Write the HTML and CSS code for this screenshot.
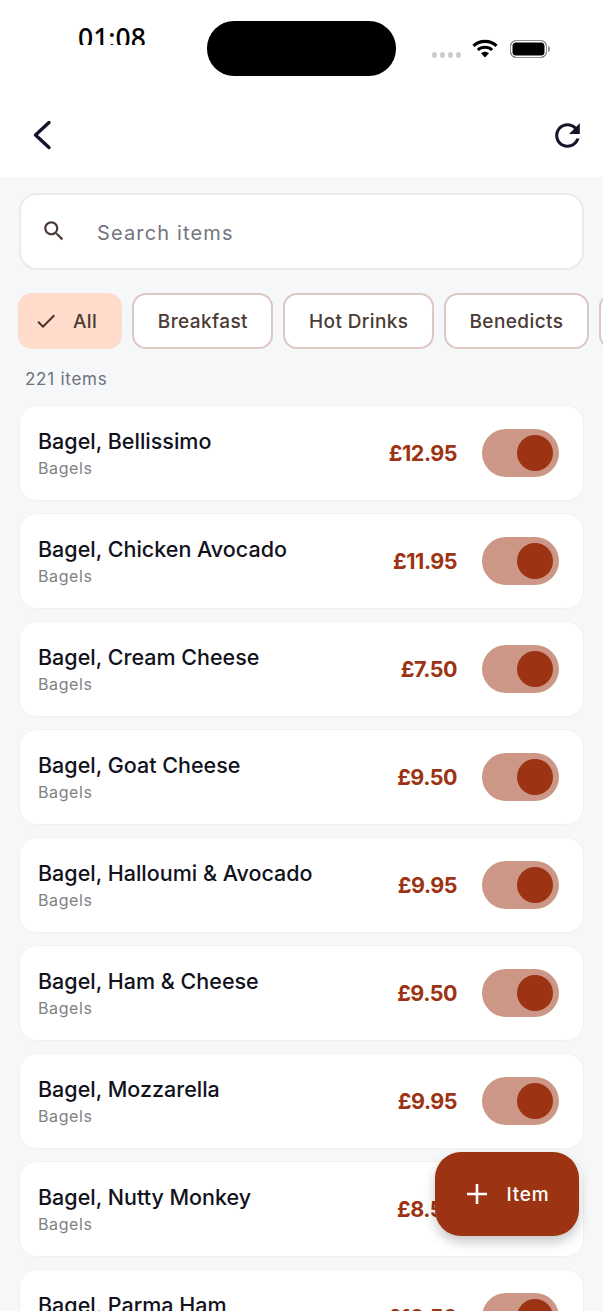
FILE: index.html
```html
<!DOCTYPE html>
<html lang="en">
<head>
<meta charset="utf-8">
<title>Items</title>
<link rel="stylesheet" href="styles.css">
</head>
<body>
<div class="screen">
  <header class="top">
    <div class="status">
      <div class="time"><span>01:08</span></div>
      <div class="island"></div>
      <div class="sys">
        <div class="dots"><i></i><i></i><i></i><i></i></div>
        <svg class="wifi" width="26" height="19" viewBox="0 0 26 19"><path d="M1.5 6.8C7.8 .9 18.2 .9 24.5 6.8" fill="none" stroke="#000" stroke-width="3.2"/><path d="M5.8 11C9.8 7.3 16.2 7.3 20.2 11" fill="none" stroke="#000" stroke-width="3"/><path d="M9 14.2 13 18.4 17 14.2C14.700 12.100 11.300 12.100 9 14.200Z" fill="#000"/></svg>
        <div class="battery"><div class="cell"></div><div class="nub"></div></div>
      </div>
    </div>
    <div class="nav">
      <svg width="22" height="32" viewBox="0 0 22 32"><path d="M18 3.500 4.500 16 18 28.500" fill="none" stroke="#14142a" stroke-width="3.400" stroke-linecap="round" stroke-linejoin="round"/></svg>
      <svg width="37" height="37" viewBox="0 0 24 24"><path fill="#14142a" d="M17.650 6.350C16.200 4.900 14.210 4 12 4c-4.420 0-7.990 3.580-7.990 8s3.570 8 7.990 8c3.730 0 6.840-2.550 7.730-6h-2.080c-.820 2.330-3.040 4-5.650 4-3.310 0-6-2.690-6-6s2.690-6 6-6c1.660 0 3.140.690 4.220 1.780L13 11h7V4l-2.350 2.350z"/></svg>
    </div>
  </header>
  <main class="body">
    <div class="search">
      <svg width="26" height="26" viewBox="0 0 24 24"><path fill="#4a3b36" d="M15.500 14h-.790l-.280-.270C15.410 12.590 16 11.110 16 9.500 16 5.910 13.090 3 9.500 3S3 5.910 3 9.500 5.910 16 9.500 16c1.610 0 3.090-.590 4.230-1.570l.270.280v.790l5 4.990L20.490 19l-4.990-5zm-6 0C7.010 14 5 11.990 5 9.500S7.010 5 9.500 5 14 7.010 14 9.500 11.990 14 9.500 14z"/></svg>
      <span>Search items</span>
    </div>
    <div class="chips">
      <div class="chip active"><svg width="24" height="24" viewBox="0 0 24 24"><path fill="#4a3028" d="M9 16.170 4.830 12l-1.410 1.410L9 19 21 7l-1.410-1.410z"/></svg><span>All</span></div>
      <div class="chip">Breakfast</div>
      <div class="chip">Hot Drinks</div>
      <div class="chip">Benedicts</div>
      <div class="chip">Salads</div>
    </div>
    <div class="count">221 items</div>
    <div class="list">
      <div class="card"><div class="info"><div class="name">Bagel, Bellissimo</div><div class="cat">Bagels</div></div><div class="price">£12.95</div><div class="toggle"><div class="knob"></div></div></div>
      <div class="card"><div class="info"><div class="name">Bagel, Chicken Avocado</div><div class="cat">Bagels</div></div><div class="price">£11.95</div><div class="toggle"><div class="knob"></div></div></div>
      <div class="card"><div class="info"><div class="name">Bagel, Cream Cheese</div><div class="cat">Bagels</div></div><div class="price">£7.50</div><div class="toggle"><div class="knob"></div></div></div>
      <div class="card"><div class="info"><div class="name">Bagel, Goat Cheese</div><div class="cat">Bagels</div></div><div class="price">£9.50</div><div class="toggle"><div class="knob"></div></div></div>
      <div class="card"><div class="info"><div class="name">Bagel, Halloumi &amp; Avocado</div><div class="cat">Bagels</div></div><div class="price">£9.95</div><div class="toggle"><div class="knob"></div></div></div>
      <div class="card"><div class="info"><div class="name">Bagel, Ham &amp; Cheese</div><div class="cat">Bagels</div></div><div class="price">£9.50</div><div class="toggle"><div class="knob"></div></div></div>
      <div class="card"><div class="info"><div class="name">Bagel, Mozzarella</div><div class="cat">Bagels</div></div><div class="price">£9.95</div><div class="toggle"><div class="knob"></div></div></div>
      <div class="card"><div class="info"><div class="name">Bagel, Nutty Monkey</div><div class="cat">Bagels</div></div><div class="price">£8.50</div><div class="toggle"><div class="knob"></div></div></div>
      <div class="card"><div class="info"><div class="name">Bagel, Parma Ham</div><div class="cat">Bagels</div></div><div class="price">£10.50</div><div class="toggle"><div class="knob"></div></div></div>
    </div>
  </main>
  <div class="fab"><svg width="26" height="26" viewBox="0 0 26 26"><path d="M13 3v20M3 13h20" stroke="#fff" stroke-width="2.600"/></svg><span>Item</span></div>
</div>
</body>
</html>
```

FILE: styles.css
```css
* { box-sizing: border-box; }
html, body { margin: 0; padding: 0; }
body { font-family: Inter, "Liberation Sans", sans-serif; background: #f6f7f9; }
.screen { position: relative; width: 603px; height: 1311px; overflow: hidden; background: #f6f7f9; }

.top { height: 177px; background: #fff; }
.status { height: 96px; display: flex; align-items: flex-start; padding: 21px 0 0 78px; }
.time { width: 129px; height: 24px; overflow: hidden; }
.time span { display: block; margin-top: 3px; font-size: 26.500px; line-height: 28px; font-weight: 500; color: #000; font-family: "Noto Sans", sans-serif; }
.island { width: 189px; height: 55px; border-radius: 27px; background: #000; }
.sys { display: flex; align-items: center; margin: 18px 0 0 36px; }
.dots { display: flex; gap: 3px; margin: 13px 11px 0 0; }
.dots i { width: 5px; height: 6px; border-radius: 50%; background: #cbcbcb; }
.wifi { margin-right: 12px; }
.battery { display: flex; align-items: center; gap: 1px; }
.cell { width: 37px; height: 18px; border: 1.500px solid #8f8f8f; border-radius: 6px; background: #000; box-shadow: inset 0 0 0 1.500px #fff; }
.nub { width: 2px; height: 6px; background: #9a9a9a; border-radius: 0 2px 2px 0; }
.nav { display: flex; justify-content: space-between; align-items: center; padding: 0 17px 0 31px; height: 78px; }

.body { padding: 16px 19px 0; }
.search { display: flex; align-items: center; height: 77px; background: #fff; border: 2px solid #ebebee; border-radius: 18px; padding: 0 20px 0 19.500px; gap: 30.500px; }
.search svg { margin-top: -1px; }
.search span { font-size: 20px; letter-spacing: 1.150px; color: #73757f; margin-top: 2px; }
.chips { display: flex; gap: 10px; margin: 23px -40px 0 -1px; }
.chip { display: flex; align-items: center; justify-content: center; flex: none; height: 56px; padding: 0 23.500px; background: #fff; border: 2px solid #dcc9c3; border-radius: 14px; font-size: 19px; font-weight: 500; letter-spacing: .4px; color: #4a3b36; }
.chip.active { background: #ffdbcc; border-color: #ffdbcc; gap: 15px; padding: 0 23px 0 14px; }
.count { margin: 19px 0 15px 6px; font-size: 17px; line-height: 22px; color: #6f727b; letter-spacing: .75px; }
.list { display: flex; flex-direction: column; gap: 12px; }
.card { display: flex; align-items: center; flex: none; height: 96px; background: #fff; border: 1px solid #f0f1f3; border-radius: 18px; padding: 0 24px 0 18px; }
.info { flex: 1; padding-top: 2px; }
.name { font-size: 21.500px; line-height: 28px; font-weight: 500; color: #12121d; margin-top: -1px; }
.cat { font-size: 16px; line-height: 24px; color: #808184; letter-spacing: .6px; margin-top: 1px; }
.price { font-size: 21.500px; font-weight: 700; letter-spacing: -.5px; color: #9c3312; margin-right: 25px; }
.toggle { display: flex; align-items: center; justify-content: flex-end; width: 77px; height: 48px; padding-right: 6px; border-radius: 24px; background: #cc9787; }
.knob { width: 36px; height: 36px; border-radius: 50%; background: #9c3312; }

.fab { position: absolute; left: 435px; top: 1152px; width: 144px; height: 84px; display: flex; align-items: center; justify-content: center; gap: 17px; padding-right: 1px; background: #9c3312; border-radius: 26px; box-shadow: 0 6px 12px rgba(0,0,0,.22); color: #fff; font-size: 19px; font-weight: 500; letter-spacing: .8px; }
```
